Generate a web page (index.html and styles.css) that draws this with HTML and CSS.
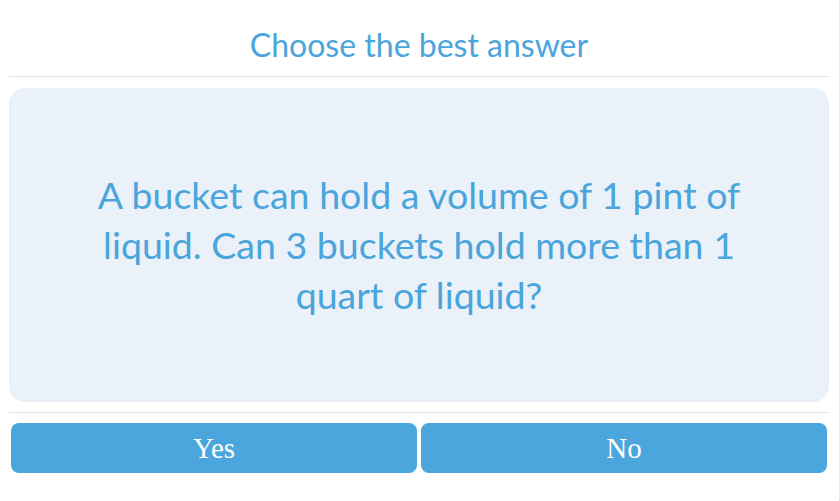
FILE: index.html
```html
<!DOCTYPE html>
<html lang="en">
<head>
  <meta charset="UTF-8">
  <meta name="viewport" content="width=device-width, initial-scale=1.0">
  <title>Quiz</title>
  <link rel="stylesheet" href="styles.css">
</head>
<body>
  <div class="quiz">
    <h1 class="quiz-title">Choose the best answer</h1>
    <div class="question">
      <p>A bucket can hold a volume of 1 pint of liquid. Can 3 buckets hold more than 1 quart of liquid?</p>
    </div>
    <div class="answers">
      <button type="button" class="answer">Yes</button>
      <button type="button" class="answer">No</button>
    </div>
  </div>
</body>
</html>
```

FILE: styles.css
```css
html {
  height: 100%;
  width: 840px;
  border-right: 1px dotted #d8d8d8;
  box-sizing: border-box;
}

body {
  margin: 0;
  padding: 0 9px;
  font-family: Lato, "Noto Sans", sans-serif;
  color: #4aa5dc;
}

.quiz {
  width: 820px;
}

.quiz-title {
  margin: 0;
  height: 77px;
  font-size: 32px;
  font-weight: normal;
  line-height: 90px;
  text-align: center;
  border-bottom: 1px solid #e2e2e6;
  box-sizing: border-box;
}

.question {
  margin-top: 11px;
  height: 314px;
  padding: 0 60px;
  box-sizing: border-box;
  display: flex;
  align-items: center;
  justify-content: center;
  background-color: #eaf1f9;
  border-radius: 16px;
}

.question p {
  margin: 0;
  font-size: 37.5px;
  line-height: 50px;
  text-align: center;
}

.answers {
  margin-top: 10px;
  padding: 10px 2px 0;
  border-top: 1px solid #e2e2e6;
  display: flex;
  gap: 4px;
}

.answer {
  flex: 1;
  height: 50px;
  border: none;
  border-radius: 8px;
  background-color: #4aa6dc;
  color: #fff;
  font-family: "Liberation Serif", serif;
  font-size: 29px;
  cursor: pointer;
}
```
